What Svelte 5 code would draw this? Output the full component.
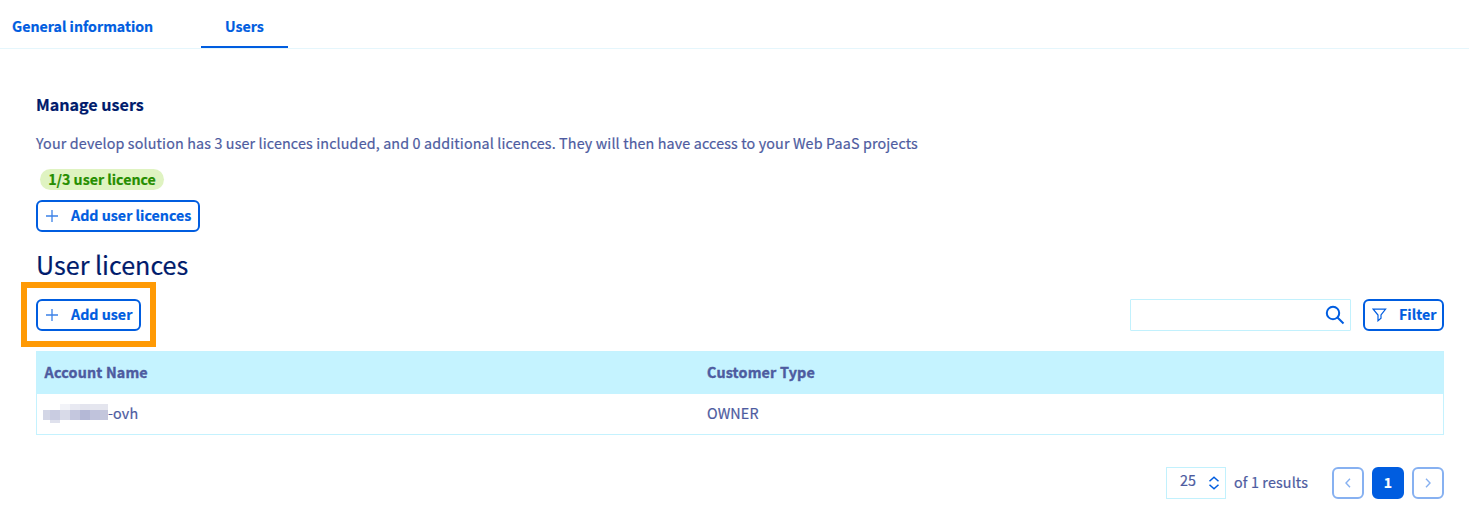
<script>
  const tabs = [
    { label: 'General information', active: false },
    { label: 'Users', active: true }
  ];
  const rows = [{ suffix: '-ovh', type: 'OWNER' }];
  const masked = [
    [0, 6, 7, 10, '#d3d6e6'], [7, 6, 10, 10, '#c9cce1'], [7, 16, 10, 3, '#dfe1ed'],
    [17, 0, 10, 6, '#f2f3f8'], [17, 6, 10, 10, '#d8dae8'],
    [27, 0, 10, 6, '#e8e9f2'], [27, 6, 10, 10, '#c4c7de'],
    [37, 0, 10, 6, '#e3e4ee'], [37, 6, 10, 10, '#b4b8d6'],
    [47, 0, 10, 6, '#e5e6ef'], [47, 6, 10, 10, '#c0c3dc'],
    [57, 0, 8, 6, '#e4e5ee'], [57, 6, 8, 10, '#c4c6dc']
  ];
</script>

{#snippet plus()}
  <svg class="plus" width="14" height="14" viewBox="0 0 14 14"><path d="M7 1v12M1 7h12" /></svg>
{/snippet}

<div class="page">
  <nav>
    {#each tabs as tab}
      <a class:active={tab.active}>{tab.label}</a>
    {/each}
  </nav>
  <main>
    <h4>Manage users</h4>
    <p>Your develop solution has 3 user licences included, and 0 additional licences. They will then have access to your Web PaaS projects</p>
    <span class="badge">1/3 user licence</span>
    <button class="btn licences">{@render plus()}<span>Add user licences</span></button>
    <h2>User licences</h2>
    <div class="toolbar">
      <div class="target">
        <button class="btn add">{@render plus()}<span>Add user</span></button>
      </div>
      <div class="search">
        <svg width="20" height="20" viewBox="0 0 20 20"><circle cx="8" cy="8" r="6.2" /><path d="M12.5 12.5l6 6" /></svg>
      </div>
      <button class="btn filter">
        <svg width="15" height="14" viewBox="0 0 15 14"><path d="M1.2 1.2h12.4L9 7v3.2l-3 2.6V7z" /></svg>
        <span>Filter</span>
      </button>
    </div>
    <div class="table">
      <div class="row head"><span>Account Name</span><span>Customer Type</span></div>
      {#each rows as row}
        <div class="row">
          <span class="account">
            <svg width="65" height="19" viewBox="0 0 65 19" shape-rendering="crispEdges">
              {#each masked as [x, y, w, h, fill]}<rect {x} {y} width={w} height={h} {fill} />{/each}
            </svg>{row.suffix}
          </span>
          <span>{row.type}</span>
        </div>
      {/each}
    </div>
    <footer>
      <div class="size">
        <span>25</span>
        <svg width="12" height="14" viewBox="0 0 12 14"><path d="M1.5 5.3L6 1.2l4.5 4.1M1.5 8.7L6 12.8l4.5-4.1" /></svg>
      </div>
      <span class="count">of 1 results</span>
      <button class="pg off"><svg width="8" height="12" viewBox="0 0 8 12"><path d="M6 1.8L2 6l4 4.2" /></svg></button>
      <button class="pg current"><span>1</span></button>
      <button class="pg off"><svg width="8" height="12" viewBox="0 0 8 12"><path d="M2 1.8L6 6l-4 4.2" /></svg></button>
    </footer>
  </main>
</div>

<style>
  :global(body) { background: #fff; }
  .page, .page * { box-sizing: border-box; }
  .page {
    height: 520px;
    overflow: hidden;
    font: 14.3px/20px "Noto Sans CJK SC", "Noto Sans", sans-serif;
    letter-spacing: 0.145px;
    color: #4d5ba0;
    -webkit-text-stroke: 0.2px currentColor;
  }
  svg { display: block; flex: none; fill: none; stroke: #005de0; }
  rect { stroke: none; }
  nav { display: flex; height: 49px; border-bottom: 1px solid #e5f6fc; }
  nav a {
    height: 48px;
    padding: 16px 24px 0;
    color: #005de0;
    font-size: 14.2px;
    letter-spacing: 0;
    font-weight: 700;
    white-space: nowrap;
  }
  nav a:first-child { width: 201px; padding: 16px 0 0 12px; }
  nav a.active { width: 87px; border-bottom: 2px solid #005de0; }
  main { display: flex; flex-direction: column; align-items: flex-start; padding: 44px 25px 0 36px; }
  h4 { margin: 0; font-size: 16.1px; line-height: 22px; letter-spacing: 0; color: #001b6c; }
  p { margin: 18px 0 0; height: 21px; white-space: nowrap; }
  .badge {
    width: 124px; height: 21px; margin: 15px 0 0 4px;
    border-radius: 11px; background: #dff3c1;
    color: #268e00; font-size: 14.2px; letter-spacing: 0; font-weight: 700; line-height: 20px; text-align: center; white-space: nowrap;
  }
  .btn {
    display: flex; align-items: center; height: 32px; padding: 0 0 0 7px;
    border: 2px solid #005de0; border-radius: 6px; background: #fff;
    font: 700 14.25px/20px "Noto Sans CJK SC", "Noto Sans", sans-serif;
    color: #005de0; white-space: nowrap;
  }
  .btn span { padding-bottom: 2px; }
  .plus { margin-right: 12px; stroke: #3b81e7; stroke-width: 1.3; }
  .licences { width: 164px; margin-top: 10px; }
  h2 { margin: 15px 0 0; height: 36px; font-size: 25.1px; line-height: 34px; letter-spacing: 0; font-weight: 400; color: #001b6c; }
  .toolbar { display: flex; align-items: center; width: 1408px; height: 65px; margin-top: -1px; }
  .target { width: 135px; height: 65px; margin-left: -15px; padding: 11px 9px; border: 6px solid #ff9a05; }
  .add { width: 105px; }
  .search {
    display: flex; justify-content: flex-end; align-items: center;
    width: 221px; height: 32px; margin-left: auto; padding-right: 5px;
    border: 1px solid #c2f1fd; border-radius: 1px;
  }
  .search svg { stroke-width: 2; }
  .filter { width: 81px; margin-left: 12px; }
  .filter svg { margin-right: 12px; stroke-width: 1.2; }
  .table { width: 1408px; height: 84px; margin-top: 4px; border: 1px solid #c5f2fe; }
  .row { display: grid; grid-template-columns: 663px 1fr; height: 40px; padding-left: 7px; line-height: 38px; }
  .head { height: 42px; background: #c5f3ff; font-weight: 700; line-height: 40px; -webkit-text-stroke-width: 0.4px; letter-spacing: 0.18px; }
  .head span:first-child { padding-left: 0.6px; }
  .account { display: flex; align-items: center; height: 38px; }
  .account svg { margin-left: -1px; }
  footer { display: flex; width: 1408px; justify-content: flex-end; align-items: center; height: 32px; margin-top: 32px; }
  .size {
    display: flex; align-items: center; width: 60px; height: 32px; padding-left: 13px;
    border: 1px solid #c2f1fd;
  }
  .size span { width: 28px; margin-top: -7px; }
  .size svg { stroke-width: 1.5; }
  .count { width: 106px; padding: 0 0 2px 8px; white-space: nowrap; }
  .pg {
    display: flex; align-items: center; justify-content: center; width: 32px; height: 32px; padding: 0;
    border: 2px solid #87b1f1; border-radius: 6px; background: #fff;
    font: 700 14px/20px "Noto Sans CJK SC", "Noto Sans", sans-serif;
  }
  .pg span { padding-bottom: 2px; }
  .pg svg { stroke: #87b1f1; stroke-width: 1.4; }
  .current { margin: 0 8px; border-color: #005de0; background: #005de0; color: #fff; }
</style>
